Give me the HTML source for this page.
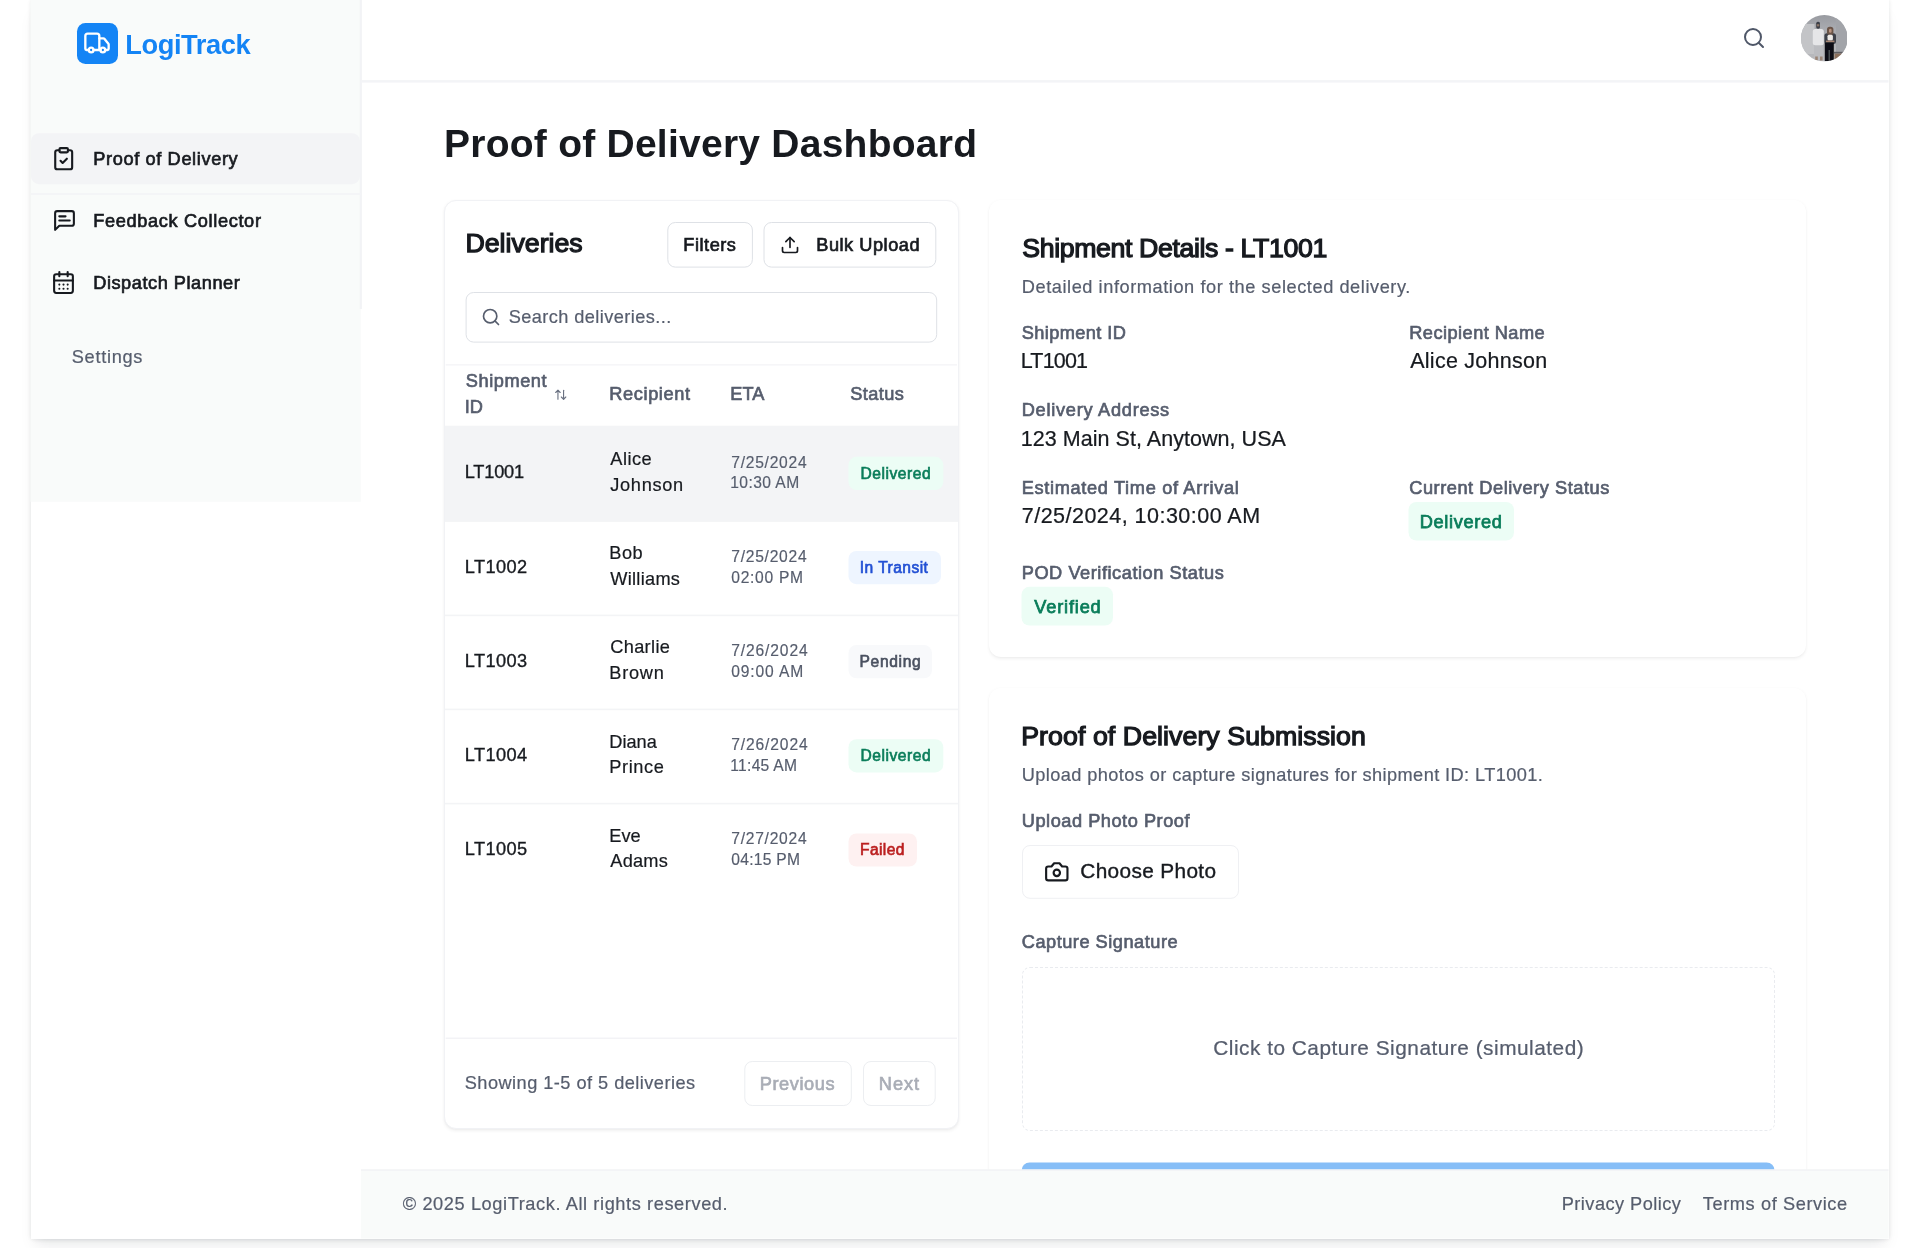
<!DOCTYPE html><html><head><meta charset="utf-8"><title>LogiTrack - Proof of Delivery Dashboard</title><style>
html,body{margin:0;padding:0;background:#fff;}body{width:1920px;height:1248px;overflow:hidden;position:relative;font-family:"Liberation Sans", sans-serif;}
.t{position:absolute;white-space:nowrap;line-height:1;font-family:"Liberation Sans", sans-serif;}
div,svg{box-sizing:border-box}
</style></head><body>
<div id="app" style="position:absolute;left:30.5px;top:0;width:1858px;height:1238.5px;background:#fff;box-shadow:0 0 4px rgba(23,26,31,.10),0 11px 16px -5px rgba(16,24,40,.085),0 4px 7px -4px rgba(16,24,40,.07);"></div>
<svg style="position:absolute;left:0;top:0" width="1920" height="1248" viewBox="0 0 1920 1248"><rect x="30.50" y="0.00" width="330.30" height="501.80" rx="0.00" fill="#f9fbfa"/><rect x="359.70" y="0.00" width="2.20" height="309.00" rx="0.00" fill="#f2f3f6"/><rect x="31.00" y="133.20" width="329.00" height="51.00" rx="8.00" fill="#f3f4f6"/><rect x="31.00" y="193.00" width="329.50" height="2.00" rx="0.00" fill="#f4f5f7"/><rect x="77.00" y="23.00" width="41.00" height="41.00" rx="8.50" fill="#1484f5"/></svg>
<svg style="position:absolute;left:83.05px;top:28.95px" width="28" height="28" viewBox="0 0 24 24" fill="none" stroke="#fff" stroke-width="2" stroke-linecap="round" stroke-linejoin="round"><path d="M14 18V6a2 2 0 0 0-2-2H4a2 2 0 0 0-2 2v11a1 1 0 0 0 1 1h2"/><path d="M15 18H9"/><path d="M19 18h2a1 1 0 0 0 1-1v-3.65a1 1 0 0 0-.22-.624l-3.48-4.35A1 1 0 0 0 17.52 8H14"/><circle cx="17" cy="18" r="2"/><circle cx="7" cy="18" r="2"/></svg>
<svg style="position:absolute;left:51.1px;top:146.0px" width="25.4" height="25.4" viewBox="0 0 24 24" fill="none" stroke="#171a1f" stroke-width="2" stroke-linecap="round" stroke-linejoin="round"><rect width="8" height="4" x="8" y="2" rx="1" ry="1"/><path d="M16 4h2a2 2 0 0 1 2 2v14a2 2 0 0 1-2 2H6a2 2 0 0 1-2-2V6a2 2 0 0 1 2-2h2"/><path d="m9 14 2 2 4-4"/></svg>
<svg style="position:absolute;left:51.9px;top:207.8px" width="25" height="25" viewBox="0 0 24 24" fill="none" stroke="#171a1f" stroke-width="2" stroke-linecap="round" stroke-linejoin="round"><path d="M21 15a2 2 0 0 1-2 2H7l-4 4V5a2 2 0 0 1 2-2h14a2 2 0 0 1 2 2z"/><path d="M13 8H7"/><path d="M17 12H7"/></svg>
<svg style="position:absolute;left:51.3px;top:270px" width="25" height="25" viewBox="0 0 24 24" fill="none" stroke="#171a1f" stroke-width="2" stroke-linecap="round" stroke-linejoin="round"><path d="M8 2v4"/><path d="M16 2v4"/><rect width="18" height="18" x="3" y="4" rx="2"/><path d="M3 10h18"/><path d="M8 14h.01"/><path d="M12 14h.01"/><path d="M16 14h.01"/><path d="M8 18h.01"/><path d="M12 18h.01"/><path d="M16 18h.01"/></svg>
<svg style="position:absolute;left:0;top:0" width="1920" height="1248" viewBox="0 0 1920 1248"><rect x="361.50" y="80.10" width="1527.00" height="2.50" rx="0.00" fill="#f3f4f7"/></svg>
<svg style="position:absolute;left:1742.4px;top:26.4px" width="24" height="24" viewBox="0 0 24 24" fill="none" stroke="#4f5768" stroke-width="2" stroke-linecap="round" stroke-linejoin="round"><circle cx="11" cy="11" r="8"/><path d="m21 21-4.3-4.3"/></svg>
<svg style="position:absolute;left:1800.9px;top:15.3px" width="46.6" height="46.6" viewBox="0 0 46.6 46.6"><defs><clipPath id="av"><circle cx="23.3" cy="23.3" r="23.3"/></clipPath><linearGradient id="avg" x1="0" x2="0" y1="0" y2="1"><stop offset="0" stop-color="#999ba1"/><stop offset=".3" stop-color="#a9abb0"/><stop offset=".7" stop-color="#b4b5b9"/><stop offset="1" stop-color="#b9babd"/></linearGradient><filter id="avb" x="-10%" y="-10%" width="120%" height="120%"><feGaussianBlur stdDeviation="0.55"/></filter></defs><g clip-path="url(#av)"><rect width="46.6" height="46.6" fill="url(#avg)"/><g filter="url(#avb)"><rect x="0" y="9" width="13.5" height="30" fill="#c3c4c7"/><rect x="35" y="0" width="12" height="37" fill="#a2a4a9"/><rect x="33" y="36.8" width="14" height="1.8" fill="#5e5f64"/><rect x="33.5" y="38.6" width="14" height="8" fill="#8b705d"/><rect x="13" y="30" width="9" height="15.5" fill="#bbbcc0"/><rect x="14.2" y="41.5" width="2.6" height="4" fill="#9c8677"/><rect x="19" y="41.5" width="2.6" height="4" fill="#9c8677"/><rect x="11.8" y="14" width="11" height="16.3" rx="2.5" fill="#e6e6e8"/><rect x="15.2" y="6.8" width="3.8" height="6.9" rx="1.6" fill="#3b3d45"/><rect x="15.8" y="9.2" width="2.6" height="2.2" fill="#8a7468"/><rect x="23.4" y="18.2" width="11.6" height="10.8" rx="2.5" fill="#3d4048"/><rect x="26" y="11.8" width="6.4" height="8.2" rx="2.8" fill="#6a5448"/><rect x="28" y="13.8" width="2.6" height="4" rx="1.2" fill="#b9927e"/><rect x="26.5" y="19.8" width="5.4" height="5.6" rx="1.5" fill="#ece9e6"/><rect x="25" y="25.6" width="8.4" height="1.6" fill="#a98674"/><rect x="23.8" y="27.6" width="9" height="18.5" fill="#0c1012"/><rect x="27.6" y="35" width="1.2" height="11" fill="#5d5f63"/></g></g></svg>
<div style="position:absolute;left:444px;top:200px;width:515px;height:929px;background:#fff;border:1px solid #f1f2f5;border-radius:12px;box-shadow:0 1.2px 3.5px rgba(0,0,0,.055),0 1.2px 2.5px -1.2px rgba(0,0,0,.055);overflow:hidden;"></div>
<div style="position:absolute;left:989px;top:199.6px;width:817px;height:457.2px;background:#fff;border-radius:12px;box-shadow:0 1.2px 3.5px rgba(0,0,0,.055),0 1.2px 2.5px -1.2px rgba(0,0,0,.055);"></div>
<div style="position:absolute;left:980px;top:680px;width:840px;height:490px;overflow:hidden"><div style="position:absolute;left:9px;top:7.6px;width:817px;height:600px;background:#fff;border-radius:12px;box-shadow:0 1.2px 3.5px rgba(0,0,0,.055),0 1.2px 2.5px -1.2px rgba(0,0,0,.055);"></div></div>
<svg style="position:absolute;left:0;top:0" width="1920" height="1248" viewBox="0 0 1920 1248"><rect x="667.80" y="222.50" width="84.60" height="44.60" rx="7.50" fill="#fff" stroke="#dee1e6" stroke-width="1.0"/><rect x="764.00" y="222.50" width="171.80" height="44.60" rx="7.50" fill="#fff" stroke="#dee1e6" stroke-width="1.0"/></svg>
<svg style="position:absolute;left:780px;top:234.5px" width="20" height="20" viewBox="0 0 24 24" fill="none" stroke="#171a1f" stroke-width="2" stroke-linecap="round" stroke-linejoin="round"><path d="M21 15v4a2 2 0 0 1-2 2H5a2 2 0 0 1-2-2v-4"/><polyline points="17 8 12 3 7 8"/><line x1="12" x2="12" y1="3" y2="15"/></svg>
<svg style="position:absolute;left:0;top:0" width="1920" height="1248" viewBox="0 0 1920 1248"><rect x="466.10" y="292.50" width="470.60" height="49.60" rx="7.50" fill="#fff" stroke="#dee1e6" stroke-width="1.0"/></svg>
<svg style="position:absolute;left:481px;top:307.2px" width="20" height="20" viewBox="0 0 24 24" fill="none" stroke="#565d6d" stroke-width="2" stroke-linecap="round" stroke-linejoin="round"><circle cx="11" cy="11" r="8"/><path d="m21 21-4.3-4.3"/></svg>
<svg style="position:absolute;left:0;top:0" width="1920" height="1248" viewBox="0 0 1920 1248"><rect x="445.60" y="364.40" width="511.40" height="1.00" rx="0.00" fill="#f0f1f4"/></svg>
<svg style="position:absolute;left:554.2px;top:387.8px" width="13.5" height="13.5" viewBox="0 0 24 24" fill="none" stroke="#6b7282" stroke-width="2" stroke-linecap="round" stroke-linejoin="round"><path d="m21 16-4 4-4-4"/><path d="M17 20V4"/><path d="m3 8 4-4 4 4"/><path d="M7 4v16"/></svg>
<svg style="position:absolute;left:0;top:0" width="1920" height="1248" viewBox="0 0 1920 1248"><rect x="445.00" y="425.70" width="513.00" height="96.20" rx="0.00" fill="#f3f4f6"/><rect x="445.00" y="614.60" width="513.00" height="1.60" rx="0.00" fill="#f3f4f6"/><rect x="445.00" y="708.60" width="513.00" height="1.60" rx="0.00" fill="#f3f4f6"/><rect x="445.00" y="802.80" width="513.00" height="1.60" rx="0.00" fill="#f3f4f6"/><rect x="848.50" y="456.80" width="94.80" height="33.20" rx="8.00" fill="#ecfdf5"/><rect x="848.50" y="550.95" width="92.50" height="33.20" rx="8.00" fill="#eef5ff"/><rect x="848.50" y="645.10" width="83.50" height="33.20" rx="8.00" fill="#f8f9fb"/><rect x="848.50" y="739.25" width="94.80" height="33.20" rx="8.00" fill="#ecfdf5"/><rect x="848.50" y="833.40" width="68.50" height="33.20" rx="8.00" fill="#fef1f1"/><rect x="445.60" y="1037.60" width="511.40" height="1.20" rx="0.00" fill="#f0f1f4"/><rect x="744.80" y="1061.50" width="106.50" height="44.00" rx="7.50" fill="#fff" stroke="#eceef1" stroke-width="1.0"/><rect x="863.50" y="1061.50" width="71.70" height="44.00" rx="7.50" fill="#fff" stroke="#eceef1" stroke-width="1.0"/><rect x="1408.50" y="502.00" width="105.50" height="38.60" rx="8.00" fill="#ecfdf5"/><rect x="1021.50" y="586.80" width="91.50" height="38.70" rx="8.00" fill="#ecfdf5"/><rect x="1022.50" y="845.50" width="216.00" height="52.80" rx="7.50" fill="#fff" stroke="#eff0f3" stroke-width="1.0"/></svg>
<svg style="position:absolute;left:1043.6px;top:859.0px" width="25.6" height="25.6" viewBox="0 0 24 24" fill="none" stroke="#171a1f" stroke-width="2" stroke-linecap="round" stroke-linejoin="round"><path d="M14.5 4h-5L7 7H4a2 2 0 0 0-2 2v9a2 2 0 0 0 2 2h16a2 2 0 0 0 2-2V9a2 2 0 0 0-2-2h-3l-2.5-3z"/><circle cx="12" cy="13" r="3"/></svg>
<div style="position:absolute;left:1022px;top:967px;width:752.5px;height:163.5px;border:1px dashed #e9ebef;border-radius:8px;"></div>
<svg style="position:absolute;left:0;top:0" width="1920" height="1248" viewBox="0 0 1920 1248"><rect x="1021.60" y="1162.40" width="753.00" height="40.00" rx="8.00" fill="#86bef7"/><rect x="361.00" y="1169.20" width="1527.50" height="1.80" rx="0.00" fill="#f3f4f6"/><rect x="361.00" y="1171.00" width="1527.50" height="67.50" rx="0.00" fill="#f9fbfa"/></svg>
<div id="txt" style="position:absolute;left:0;top:0;width:1920px;height:1248px;will-change:transform;">
<div class="t" id="logo" style="left:125.25px;top:30.92px;font-size:27.27px;font-weight:700;color:#1484f5;letter-spacing:-0.425px;">LogiTrack</div>
<div class="t" id="nav1" style="left:93.25px;top:150.09px;font-size:18.2px;font-weight:400;color:#171a1f;letter-spacing:0.625px;-webkit-text-stroke:0.67px #171a1f;">Proof of Delivery</div>
<div class="t" id="nav2" style="left:93.25px;top:212.09px;font-size:18.2px;font-weight:400;color:#171a1f;letter-spacing:0.647px;-webkit-text-stroke:0.67px #171a1f;">Feedback Collector</div>
<div class="t" id="nav3" style="left:93.25px;top:273.99px;font-size:18.2px;font-weight:400;color:#171a1f;letter-spacing:0.533px;-webkit-text-stroke:0.67px #171a1f;">Dispatch Planner</div>
<div class="t" id="settings" style="left:71.75px;top:347.79px;font-size:18.2px;font-weight:400;color:#565d6d;letter-spacing:0.714px;-webkit-text-stroke:0.21px #565d6d;">Settings</div>
<div class="t" id="title" style="left:444.00px;top:123.89px;font-size:39.0px;font-weight:700;color:#171a1f;letter-spacing:0.246px;">Proof of Delivery Dashboard</div>
<div class="t" id="deliv" style="left:465.50px;top:229.90px;font-size:26.700000000000003px;font-weight:400;color:#171a1f;letter-spacing:0.000px;-webkit-text-stroke:1.25px #171a1f;">Deliveries</div>
<div class="t" id="filters" style="left:683.25px;top:236.49px;font-size:18.2px;font-weight:400;color:#171a1f;letter-spacing:0.533px;-webkit-text-stroke:0.67px #171a1f;">Filters</div>
<div class="t" id="bulk" style="left:816.25px;top:236.49px;font-size:18.2px;font-weight:400;color:#171a1f;letter-spacing:0.520px;-webkit-text-stroke:0.67px #171a1f;">Bulk Upload</div>
<div class="t" id="search" style="left:508.75px;top:308.19px;font-size:18.2px;font-weight:400;color:#565d6d;letter-spacing:0.411px;-webkit-text-stroke:0.21px #565d6d;">Search deliveries...</div>
<div class="t" id="th1a" style="left:465.75px;top:372.19px;font-size:18.2px;font-weight:400;color:#565d6d;letter-spacing:0.571px;-webkit-text-stroke:0.67px #565d6d;">Shipment</div>
<div class="t" id="th1b" style="left:464.75px;top:397.79px;font-size:18.2px;font-weight:400;color:#565d6d;letter-spacing:0.000px;-webkit-text-stroke:0.67px #565d6d;">ID</div>
<div class="t" id="th2" style="left:609.25px;top:385.39px;font-size:18.2px;font-weight:400;color:#565d6d;letter-spacing:0.625px;-webkit-text-stroke:0.67px #565d6d;">Recipient</div>
<div class="t" id="th3" style="left:730.25px;top:385.39px;font-size:18.2px;font-weight:400;color:#565d6d;letter-spacing:0.000px;-webkit-text-stroke:0.67px #565d6d;">ETA</div>
<div class="t" id="th4" style="left:850.25px;top:385.39px;font-size:18.2px;font-weight:400;color:#565d6d;letter-spacing:0.400px;-webkit-text-stroke:0.67px #565d6d;">Status</div>
<div class="t" id="r0id" style="left:464.75px;top:463.49px;font-size:18.2px;font-weight:400;color:#171a1f;letter-spacing:-0.200px;-webkit-text-stroke:0.35px #171a1f;">LT1001</div>
<div class="t" id="r0a" style="left:610.25px;top:450.19px;font-size:18.2px;font-weight:400;color:#171a1f;letter-spacing:0.500px;-webkit-text-stroke:0.21px #171a1f;">Alice</div>
<div class="t" id="r0b" style="left:610.25px;top:475.79px;font-size:18.2px;font-weight:400;color:#171a1f;letter-spacing:0.700px;-webkit-text-stroke:0.21px #171a1f;">Johnson</div>
<div class="t" id="r0d" style="left:731.25px;top:454.59px;font-size:15.600000000000001px;font-weight:400;color:#565d6d;letter-spacing:0.750px;-webkit-text-stroke:0.18px #565d6d;">7/25/2024</div>
<div class="t" id="r0t" style="left:730.25px;top:475.39px;font-size:15.600000000000001px;font-weight:400;color:#565d6d;letter-spacing:0.429px;-webkit-text-stroke:0.18px #565d6d;">10:30 AM</div>
<div class="t" id="r0s" style="left:860.50px;top:465.69px;font-size:15.600000000000001px;font-weight:400;color:#0a7d5a;letter-spacing:0.525px;-webkit-text-stroke:0.64px #0a7d5a;">Delivered</div>
<div class="t" id="r1id" style="left:464.75px;top:557.64px;font-size:18.2px;font-weight:400;color:#171a1f;letter-spacing:0.400px;-webkit-text-stroke:0.35px #171a1f;">LT1002</div>
<div class="t" id="r1a" style="left:609.25px;top:544.34px;font-size:18.2px;font-weight:400;color:#171a1f;letter-spacing:0.500px;-webkit-text-stroke:0.21px #171a1f;">Bob</div>
<div class="t" id="r1b" style="left:610.25px;top:569.94px;font-size:18.2px;font-weight:400;color:#171a1f;letter-spacing:0.286px;-webkit-text-stroke:0.21px #171a1f;">Williams</div>
<div class="t" id="r1d" style="left:731.25px;top:548.74px;font-size:15.600000000000001px;font-weight:400;color:#565d6d;letter-spacing:0.750px;-webkit-text-stroke:0.18px #565d6d;">7/25/2024</div>
<div class="t" id="r1t" style="left:731.25px;top:569.54px;font-size:15.600000000000001px;font-weight:400;color:#565d6d;letter-spacing:0.714px;-webkit-text-stroke:0.18px #565d6d;">02:00 PM</div>
<div class="t" id="r1s" style="left:859.75px;top:559.84px;font-size:15.600000000000001px;font-weight:400;color:#2250d4;letter-spacing:0.444px;-webkit-text-stroke:0.64px #2250d4;">In Transit</div>
<div class="t" id="r2id" style="left:464.75px;top:651.79px;font-size:18.2px;font-weight:400;color:#171a1f;letter-spacing:0.400px;-webkit-text-stroke:0.35px #171a1f;">LT1003</div>
<div class="t" id="r2a" style="left:610.25px;top:638.49px;font-size:18.2px;font-weight:400;color:#171a1f;letter-spacing:0.333px;-webkit-text-stroke:0.21px #171a1f;">Charlie</div>
<div class="t" id="r2b" style="left:609.25px;top:664.09px;font-size:18.2px;font-weight:400;color:#171a1f;letter-spacing:0.750px;-webkit-text-stroke:0.21px #171a1f;">Brown</div>
<div class="t" id="r2d" style="left:731.25px;top:642.89px;font-size:15.600000000000001px;font-weight:400;color:#565d6d;letter-spacing:0.875px;-webkit-text-stroke:0.18px #565d6d;">7/26/2024</div>
<div class="t" id="r2t" style="left:731.25px;top:663.69px;font-size:15.600000000000001px;font-weight:400;color:#565d6d;letter-spacing:0.857px;-webkit-text-stroke:0.18px #565d6d;">09:00 AM</div>
<div class="t" id="r2s" style="left:859.50px;top:653.99px;font-size:15.600000000000001px;font-weight:400;color:#4a5160;letter-spacing:0.667px;-webkit-text-stroke:0.64px #4a5160;">Pending</div>
<div class="t" id="r3id" style="left:464.75px;top:745.94px;font-size:18.2px;font-weight:400;color:#171a1f;letter-spacing:0.400px;-webkit-text-stroke:0.35px #171a1f;">LT1004</div>
<div class="t" id="r3a" style="left:609.25px;top:732.64px;font-size:18.2px;font-weight:400;color:#171a1f;letter-spacing:0.000px;-webkit-text-stroke:0.21px #171a1f;">Diana</div>
<div class="t" id="r3b" style="left:609.25px;top:758.24px;font-size:18.2px;font-weight:400;color:#171a1f;letter-spacing:0.600px;-webkit-text-stroke:0.21px #171a1f;">Prince</div>
<div class="t" id="r3d" style="left:731.25px;top:737.04px;font-size:15.600000000000001px;font-weight:400;color:#565d6d;letter-spacing:0.875px;-webkit-text-stroke:0.18px #565d6d;">7/26/2024</div>
<div class="t" id="r3t" style="left:730.25px;top:757.84px;font-size:15.600000000000001px;font-weight:400;color:#565d6d;letter-spacing:0.286px;-webkit-text-stroke:0.18px #565d6d;">11:45 AM</div>
<div class="t" id="r3s" style="left:860.50px;top:748.14px;font-size:15.600000000000001px;font-weight:400;color:#0a7d5a;letter-spacing:0.525px;-webkit-text-stroke:0.64px #0a7d5a;">Delivered</div>
<div class="t" id="r4id" style="left:464.75px;top:840.09px;font-size:18.2px;font-weight:400;color:#171a1f;letter-spacing:0.400px;-webkit-text-stroke:0.35px #171a1f;">LT1005</div>
<div class="t" id="r4a" style="left:609.25px;top:826.79px;font-size:18.2px;font-weight:400;color:#171a1f;letter-spacing:0.000px;-webkit-text-stroke:0.21px #171a1f;">Eve</div>
<div class="t" id="r4b" style="left:610.25px;top:852.39px;font-size:18.2px;font-weight:400;color:#171a1f;letter-spacing:0.250px;-webkit-text-stroke:0.21px #171a1f;">Adams</div>
<div class="t" id="r4d" style="left:731.25px;top:831.19px;font-size:15.600000000000001px;font-weight:400;color:#565d6d;letter-spacing:0.750px;-webkit-text-stroke:0.18px #565d6d;">7/27/2024</div>
<div class="t" id="r4t" style="left:731.25px;top:851.99px;font-size:15.600000000000001px;font-weight:400;color:#565d6d;letter-spacing:0.286px;-webkit-text-stroke:0.18px #565d6d;">04:15 PM</div>
<div class="t" id="r4s" style="left:860.00px;top:842.29px;font-size:15.600000000000001px;font-weight:400;color:#bb2020;letter-spacing:0.400px;-webkit-text-stroke:0.64px #bb2020;">Failed</div>
<div class="t" id="showing" style="left:464.75px;top:1073.89px;font-size:18.2px;font-weight:400;color:#565d6d;letter-spacing:0.462px;-webkit-text-stroke:0.21px #565d6d;">Showing 1-5 of 5 deliveries</div>
<div class="t" id="prev" style="left:759.75px;top:1075.09px;font-size:18.2px;font-weight:400;color:#a9adb6;letter-spacing:0.571px;-webkit-text-stroke:0.67px #a9adb6;">Previous</div>
<div class="t" id="next" style="left:878.75px;top:1075.09px;font-size:18.2px;font-weight:400;color:#a9adb6;letter-spacing:1.000px;-webkit-text-stroke:0.67px #a9adb6;">Next</div>
<div class="t" id="sd" style="left:1022.25px;top:234.60px;font-size:26.700000000000003px;font-weight:400;color:#171a1f;letter-spacing:-0.375px;-webkit-text-stroke:1.25px #171a1f;">Shipment Details - LT1001</div>
<div class="t" id="sdsub" style="left:1021.75px;top:277.99px;font-size:18.2px;font-weight:400;color:#565d6d;letter-spacing:0.565px;-webkit-text-stroke:0.21px #565d6d;">Detailed information for the selected delivery.</div>
<div class="t" id="l1" style="left:1021.75px;top:323.59px;font-size:18.2px;font-weight:400;color:#565d6d;letter-spacing:0.400px;-webkit-text-stroke:0.67px #565d6d;">Shipment ID</div>
<div class="t" id="v1" style="left:1020.75px;top:351.00px;font-size:21.5px;font-weight:400;color:#171a1f;letter-spacing:-0.800px;-webkit-text-stroke:0.24px #171a1f;">LT1001</div>
<div class="t" id="l2" style="left:1409.25px;top:323.59px;font-size:18.2px;font-weight:400;color:#565d6d;letter-spacing:0.462px;-webkit-text-stroke:0.67px #565d6d;">Recipient Name</div>
<div class="t" id="v2" style="left:1410.25px;top:351.00px;font-size:21.5px;font-weight:400;color:#171a1f;letter-spacing:0.250px;-webkit-text-stroke:0.24px #171a1f;">Alice Johnson</div>
<div class="t" id="l3" style="left:1021.75px;top:401.09px;font-size:18.2px;font-weight:400;color:#565d6d;letter-spacing:0.733px;-webkit-text-stroke:0.67px #565d6d;">Delivery Address</div>
<div class="t" id="v3" style="left:1020.75px;top:428.60px;font-size:21.5px;font-weight:400;color:#171a1f;letter-spacing:0.042px;-webkit-text-stroke:0.24px #171a1f;">123 Main St, Anytown, USA</div>
<div class="t" id="l4" style="left:1021.75px;top:478.59px;font-size:18.2px;font-weight:400;color:#565d6d;letter-spacing:0.667px;-webkit-text-stroke:0.67px #565d6d;">Estimated Time of Arrival</div>
<div class="t" id="v4" style="left:1021.75px;top:506.20px;font-size:21.5px;font-weight:400;color:#171a1f;letter-spacing:0.476px;-webkit-text-stroke:0.24px #171a1f;">7/25/2024, 10:30:00 AM</div>
<div class="t" id="l5" style="left:1409.25px;top:478.59px;font-size:18.2px;font-weight:400;color:#565d6d;letter-spacing:0.545px;-webkit-text-stroke:0.67px #565d6d;">Current Delivery Status</div>
<div class="t" id="b5" style="left:1419.75px;top:512.59px;font-size:18.2px;font-weight:400;color:#0a7d5a;letter-spacing:0.650px;-webkit-text-stroke:0.75px #0a7d5a;">Delivered</div>
<div class="t" id="l6" style="left:1021.75px;top:563.89px;font-size:18.2px;font-weight:400;color:#565d6d;letter-spacing:0.545px;-webkit-text-stroke:0.67px #565d6d;">POD Verification Status</div>
<div class="t" id="b6" style="left:1034.25px;top:597.59px;font-size:18.2px;font-weight:400;color:#0a7d5a;letter-spacing:0.829px;-webkit-text-stroke:0.75px #0a7d5a;">Verified</div>
<div class="t" id="pod" style="left:1021.25px;top:722.70px;font-size:26.700000000000003px;font-weight:400;color:#171a1f;letter-spacing:0.074px;-webkit-text-stroke:1.25px #171a1f;">Proof of Delivery Submission</div>
<div class="t" id="podsub" style="left:1021.75px;top:765.79px;font-size:18.2px;font-weight:400;color:#565d6d;letter-spacing:0.407px;-webkit-text-stroke:0.21px #565d6d;">Upload photos or capture signatures for shipment ID: LT1001.</div>
<div class="t" id="upl" style="left:1021.75px;top:811.59px;font-size:18.2px;font-weight:400;color:#565d6d;letter-spacing:0.529px;-webkit-text-stroke:0.67px #565d6d;">Upload Photo Proof</div>
<div class="t" id="choose" style="left:1080.25px;top:860.89px;font-size:20.8px;font-weight:400;color:#171a1f;letter-spacing:0.364px;-webkit-text-stroke:0.40px #171a1f;">Choose Photo</div>
<div class="t" id="cap" style="left:1021.75px;top:933.09px;font-size:18.2px;font-weight:400;color:#565d6d;letter-spacing:0.513px;-webkit-text-stroke:0.67px #565d6d;">Capture Signature</div>
<div class="t" id="click" style="left:1213.25px;top:1038.19px;font-size:20.8px;font-weight:400;color:#565d6d;letter-spacing:0.514px;-webkit-text-stroke:0.24px #565d6d;">Click to Capture Signature (simulated)</div>
<div class="t" id="copy" style="left:402.75px;top:1194.99px;font-size:18.2px;font-weight:400;color:#565d6d;letter-spacing:0.595px;-webkit-text-stroke:0.21px #565d6d;">© 2025 LogiTrack. All rights reserved.</div>
<div class="t" id="priv" style="left:1561.75px;top:1194.99px;font-size:18.2px;font-weight:400;color:#565d6d;letter-spacing:0.462px;-webkit-text-stroke:0.21px #565d6d;">Privacy Policy</div>
<div class="t" id="terms" style="left:1702.75px;top:1194.99px;font-size:18.2px;font-weight:400;color:#565d6d;letter-spacing:0.600px;-webkit-text-stroke:0.21px #565d6d;">Terms of Service</div>
</div>
</body></html>
